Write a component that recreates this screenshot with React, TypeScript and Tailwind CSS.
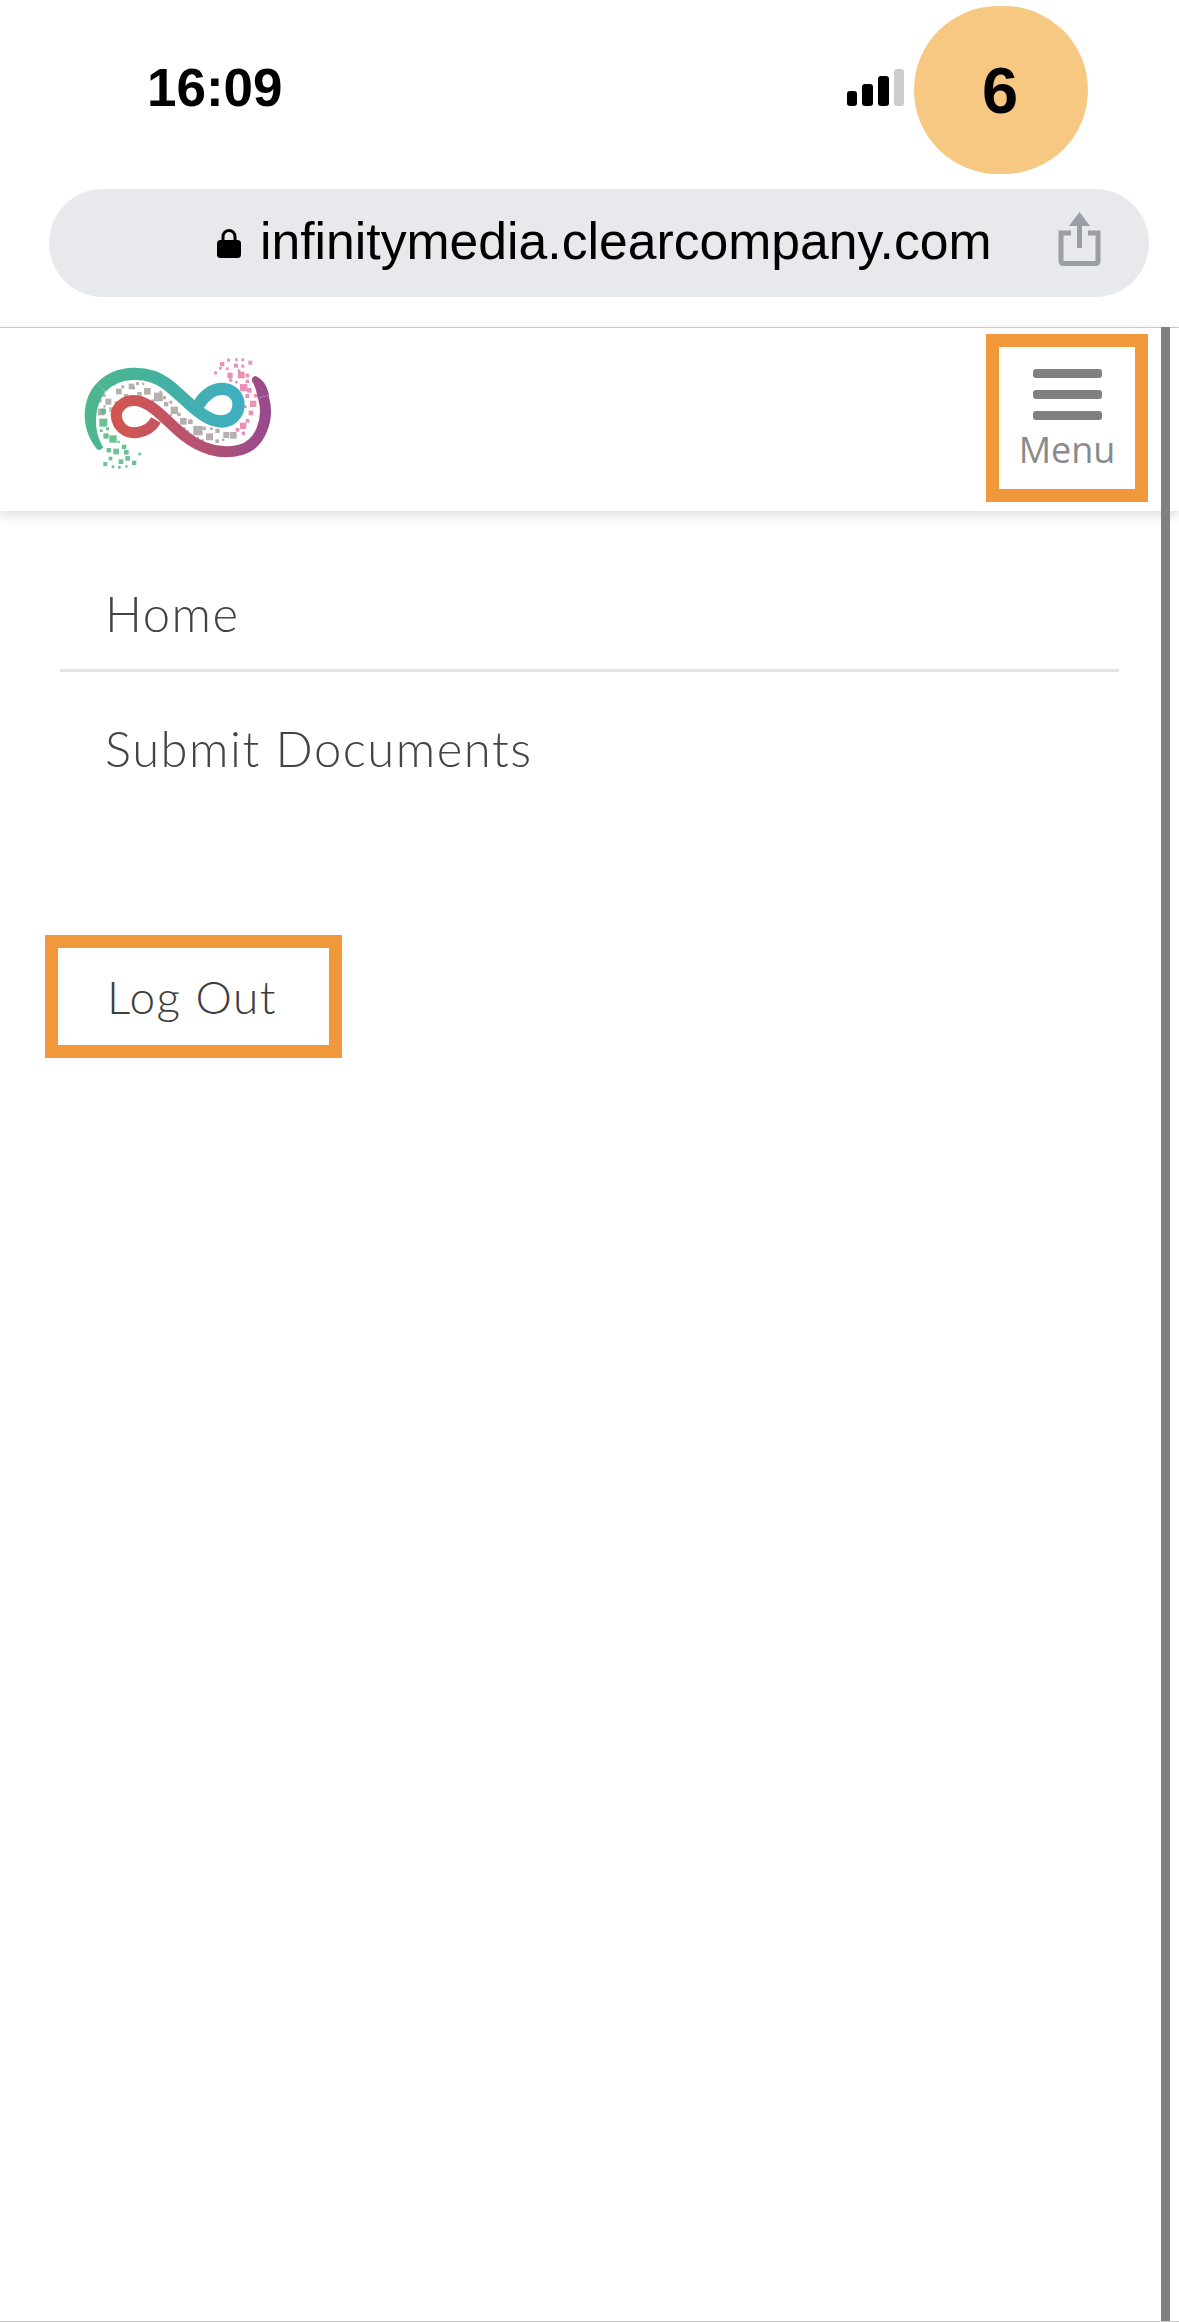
import { ReactNode } from 'react';

// ============================================
// Logo squares: [x, y, size] in the logo's viewBox
// ============================================
const graySquares = [
  [136, 176, 18], [168, 146, 17], [206, 131, 17], [252, 144, 20], [282, 158, 26], [232, 156, 13], [192, 162, 13],
  [114, 206, 20], [148, 202, 13], [164, 184, 10], [312, 186, 13], [332, 200, 22], [360, 234, 20], [384, 238, 14],
  [400, 258, 28], [392, 288, 12], [438, 280, 21], [466, 266, 13], [490, 276, 18], [510, 276, 20], [428, 260, 10],
  [308, 168, 10], [328, 182, 9], [352, 218, 10], [466, 298, 11], [422, 298, 9], [274, 178, 9], [184, 136, 9],
  [228, 126, 9], [128, 162, 9], [368, 262, 10], [450, 262, 8], [218, 140, 7], [246, 128, 7], [298, 152, 7],
  [380, 270, 7], [410, 290, 7], [486, 296, 7], [130, 196, 7], [118, 180, 7], [345, 250, 6], [330, 222, 6],
];
const greenSquares = [
  [118, 236, 24], [130, 280, 16], [148, 286, 22], [140, 324, 13], [160, 326, 17], [186, 314, 13], [192, 330, 14],
  [146, 350, 11], [176, 358, 14], [130, 366, 12], [155, 376, 8], [174, 378, 8], [196, 348, 14], [216, 362, 13],
  [235, 338, 8], [196, 376, 7], [122, 206, 16], [138, 262, 9], [120, 268, 8], [172, 302, 7],
];
const pinkSquares = [
  [480, 66, 13], [501, 56, 9], [525, 55, 8], [544, 55, 8], [565, 62, 12], [522, 71, 12], [544, 74, 9],
  [462, 94, 9], [477, 81, 8], [498, 82, 8], [502, 98, 16], [534, 95, 20], [557, 101, 11], [533, 88, 8],
  [507, 115, 10], [525, 122, 8], [540, 132, 22], [561, 144, 14], [557, 119, 10], [570, 182, 19], [556, 162, 12],
  [582, 162, 10], [566, 212, 14], [540, 248, 19], [557, 237, 11], [545, 275, 10], [527, 264, 11], [552, 196, 8],
];

function Logo() {
  return (
    <svg viewBox="0 0 690 420" className="w-[230px] h-[140px] mt-[6px]">
      <defs>
        <linearGradient id="bandTop" gradientUnits="userSpaceOnUse" x1="80" y1="0" x2="540" y2="0">
          <stop offset="0" stopColor="#4fb78c" />
          <stop offset="0.5" stopColor="#44b0a2" />
          <stop offset="1" stopColor="#40afc2" />
        </linearGradient>
        <linearGradient id="bandBottom" gradientUnits="userSpaceOnUse" x1="170" y1="0" x2="625" y2="0">
          <stop offset="0" stopColor="#d2564f" />
          <stop offset="0.5" stopColor="#b9536f" />
          <stop offset="1" stopColor="#984a8c" />
        </linearGradient>
      </defs>
      {graySquares.map(([x, y, s], i) => (
        <rect key={`g${i}`} x={x} y={y} width={s} height={s} fill="#a8a29c" opacity={0.85} />
      ))}
      {greenSquares.map(([x, y, s], i) => (
        <rect key={`n${i}`} x={x} y={y} width={s} height={s} fill="#5cbb8a" opacity={0.9} />
      ))}
      {pinkSquares.map(([x, y, s], i) => (
        <rect key={`p${i}`} x={x} y={y} width={s} height={s} fill="#e57fa8" opacity={0.85} />
      ))}
      {/* tapered tails of the two bands */}
      <path d="M110 326 Q120 336 130 322 C98 270 102 200 136 156 L110 130 C62 180 62 270 110 326 Z" fill="url(#bandTop)" />
      <path d="M593 175 C590 150 583 135 576 124 Q574 110 587 108 C610 118 622 140 627 165 Z" fill="url(#bandBottom)" />
      <path
        d="M123 143 C170 92 260 88 320 132 C370 170 410 222 460 240 C510 256 540 222 535 185 C525 140 460 125 415 195"
        fill="none"
        stroke="url(#bandTop)"
        strokeWidth="37"
        strokeLinecap="butt"
      />
      <path
        d="M288 240 C265 282 200 295 175 250 C155 210 190 176 230 182 C280 190 320 245 370 285 C420 325 480 345 540 330 C600 315 630 240 610 170"
        fill="none"
        stroke="url(#bandBottom)"
        strokeWidth="33"
        strokeLinecap="butt"
      />
    </svg>
  );
}

function ShareIcon() {
  return (
    <svg viewBox="0 0 43 54" className="w-[43px] h-[54px]" fill="none" stroke="#9a9ea5" strokeWidth="5">
      <path d="M13 21 H3 V49 Q3 51.500 5.500 51.500 H37.500 Q40 51.500 40 49 V21 H30" />
      <path d="M21.500 36 V10" />
      <polygon points="21.500,0 32,14 11,14" fill="#9a9ea5" stroke="none" />
    </svg>
  );
}

function LockIcon() {
  return (
    <svg viewBox="0 0 24 30" className="w-[24px] h-[30px] mr-[19px]">
      <path d="M6 13 V8.500 A6 6 0 0 1 18 8.500 V13" fill="none" stroke="#000" strokeWidth="3" />
      <rect x="0" y="12" width="24" height="18" rx="3.500" fill="#000" />
    </svg>
  );
}

function SignalBars() {
  return (
    <div className="flex items-end gap-[5px] h-[37px] mt-[69px]">
      <span className="w-[10px] h-[15px] rounded-[3px] bg-black" />
      <span className="w-[11px] h-[22px] rounded-[3px] bg-black" />
      <span className="w-[11px] h-[30px] rounded-[3px] bg-black" />
      <span className="w-[10px] h-[37px] rounded-[3px] bg-[#cccccc]" />
    </div>
  );
}

function OrangeBox({ className, children }: { className: string; children: ReactNode }) {
  return <div className={`border-[13px] border-[#f0983a] bg-white ${className}`}>{children}</div>;
}

export default function App() {
  return (
    <div className="relative w-[1179px] h-[2322px] overflow-hidden bg-white border-b border-[#c8c8c8]">
      {/* Status bar */}
      <div className="flex items-start h-[189px] pl-[147px] pr-[91px]">
        <span className="mt-[57px] text-[53px] leading-[62px] font-semibold text-black font-['Liberation_Sans',sans-serif]">
          16:09
        </span>
        <div className="ml-auto">
          <SignalBars />
        </div>
        <div className="ml-[10px] mt-[6px] w-[174px] h-[168px] rounded-full bg-[#f6c882] flex items-center justify-center">
          <span className="text-[65px] leading-none font-bold text-black font-['Liberation_Sans',sans-serif] -ml-[2px]">6</span>
        </div>
      </div>

      {/* Address bar */}
      <div className="relative flex items-center mx-[49px] w-[1100px] h-[108px] rounded-[54px] bg-[#e8e9ed] pl-[168px]">
        <LockIcon />
        <span className="text-[51.700px] leading-none text-black font-['Liberation_Sans',sans-serif] -mt-[3px]">
          infinitymedia.clearcompany.com
        </span>
        <div className="absolute left-[1009px] top-[23px]">
          <ShareIcon />
        </div>
      </div>

      {/* Site header */}
      <header className="mt-[30px] h-[184px] flex items-start justify-between border-t border-[#c8c8c8] bg-white pt-[6px] pl-[60px] pr-[31px] shadow-[0_4px_12px_rgba(0,0,0,0.14)]">
        <Logo />
        <OrangeBox className="w-[162px] h-[168px] flex flex-col items-center pt-[22px]">
          <span className="w-[69px] h-[9px] rounded-[3px] bg-[#808080]" />
          <span className="w-[69px] h-[9px] rounded-[3px] bg-[#808080] mt-[12px]" />
          <span className="w-[69px] h-[9px] rounded-[3px] bg-[#808080] mt-[12px]" />
          <span className="mt-[8px] text-[36px] leading-[44px] text-[#8a8a8a] font-['Open_Sans',sans-serif]">Menu</span>
        </OrangeBox>
      </header>

      {/* Nav */}
      <nav className="mx-[60px] w-[1059px] mt-[74px] font-['Lato',sans-serif] font-light text-[#444444] text-[49px] leading-[56px] tracking-[1.500px]">
        <div className="pl-[45px] pb-[28px] border-b-[3px] border-[#e3e3e3]">Home</div>
        <div className="pl-[45px] pt-[48px]">Submit Documents</div>
      </nav>

      <OrangeBox className="ml-[45px] mt-[159px] w-[297px] h-[123px] flex items-center pl-[49px]">
        <span className="font-['Lato',sans-serif] font-light text-[#3d3d3d] text-[46px] leading-none tracking-[1.500px]">Log Out</span>
      </OrangeBox>

      {/* Page scrollbar */}
      <div className="absolute left-[1161px] top-[327px] bottom-0 w-[9px] bg-[#808080]" />
    </div>
  );
}
